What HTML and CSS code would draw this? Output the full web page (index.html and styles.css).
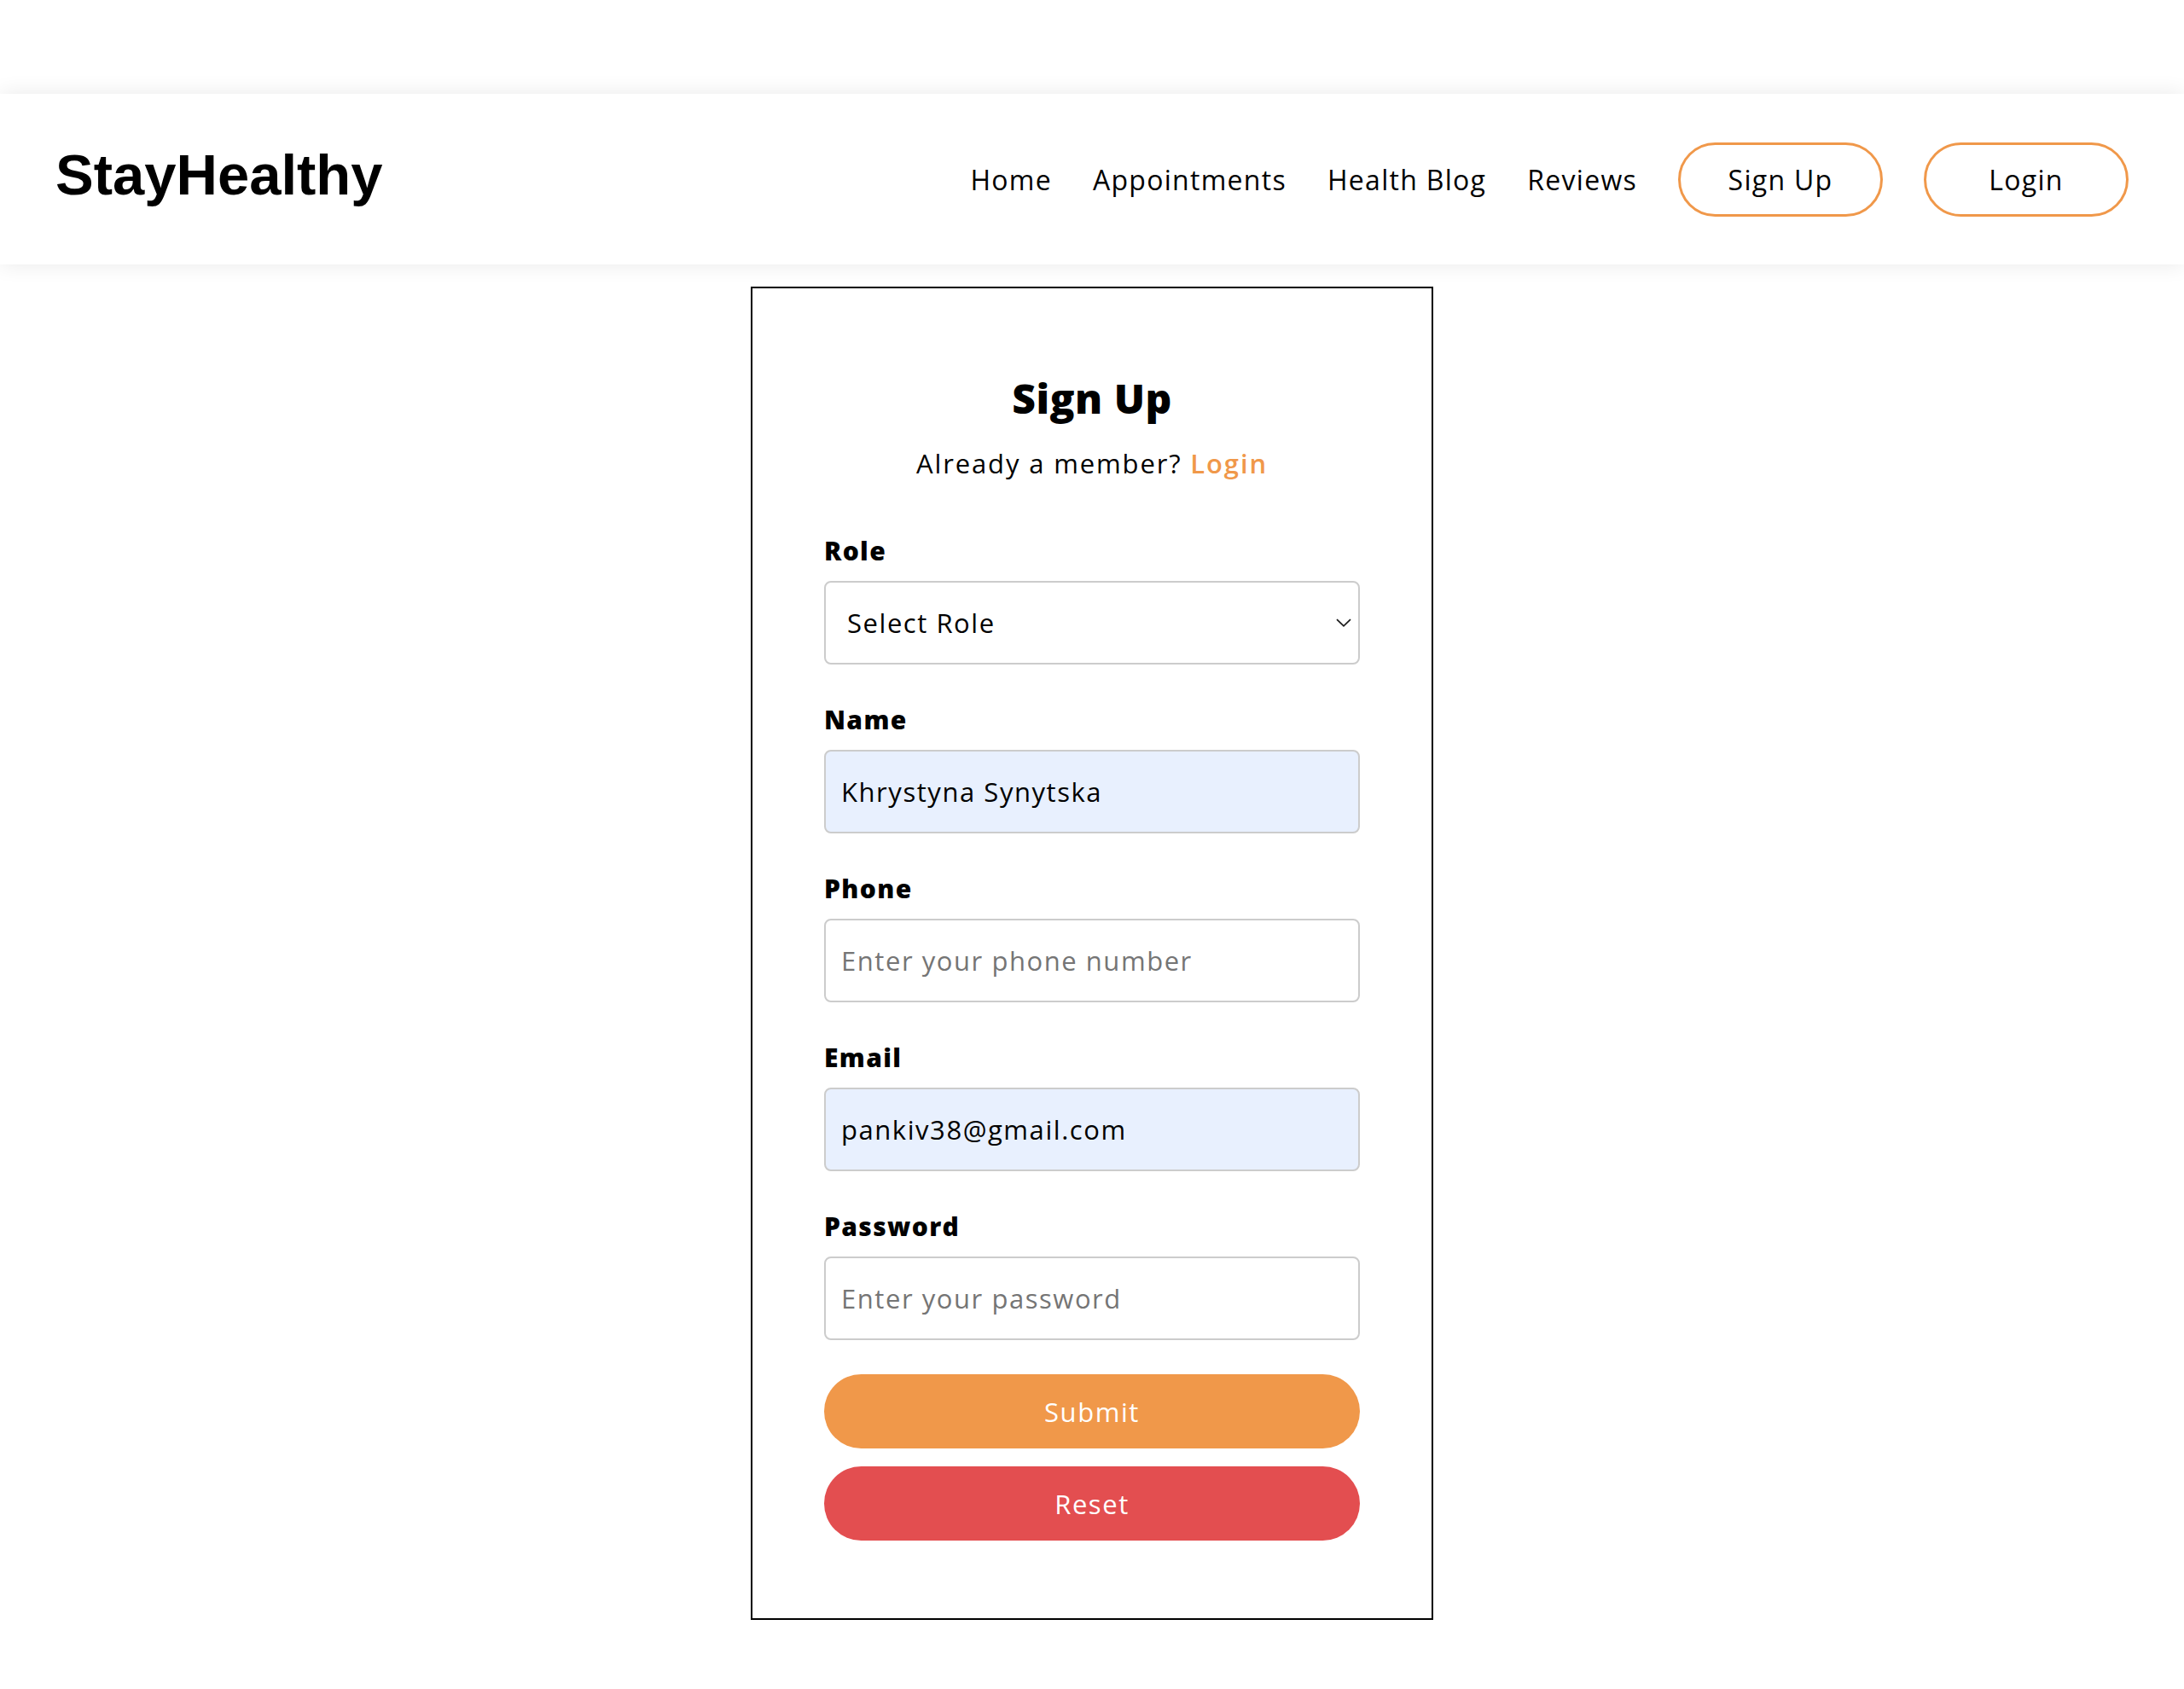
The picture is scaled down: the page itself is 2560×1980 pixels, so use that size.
FILE: index.html
```html
<!DOCTYPE html>
<html lang="en">
<head>
<meta charset="utf-8">
<title>StayHealthy - Sign Up</title>
<link rel="stylesheet" href="styles.css">
</head>
<body>
<div class="page">
  <header class="navbar">
    <a class="logo" href="#">StayHealthy</a>
    <nav class="nav">
      <a class="nav-link" href="#">Home</a>
      <a class="nav-link" href="#">Appointments</a>
      <a class="nav-link" href="#">Health Blog</a>
      <a class="nav-link" href="#">Reviews</a>
      <a class="nav-btn" href="#">Sign Up</a>
      <a class="nav-btn" href="#">Login</a>
    </nav>
  </header>
  <main class="main">
    <section class="card">
      <h1 class="title">Sign Up</h1>
      <p class="subtitle">Already a member? <a class="link" href="#">Login</a></p>
      <form class="form">
        <div class="field">
          <label class="label">Role</label>
          <div class="select">
            <span class="select-text">Select Role</span>
            <svg class="chevron" width="18" height="10" viewBox="0 0 18 10"><path d="M1 1.2 L9 8.8 L17 1.2" fill="none" stroke="#1a1a1a" stroke-width="1.7"/></svg>
          </div>
        </div>
        <div class="field">
          <label class="label">Name</label>
          <input class="input input-filled" type="text" value="Khrystyna Synytska">
        </div>
        <div class="field">
          <label class="label">Phone</label>
          <input class="input" type="tel" placeholder="Enter your phone number">
        </div>
        <div class="field">
          <label class="label">Email</label>
          <input class="input input-filled" type="email" value="pankiv38@gmail.com">
        </div>
        <div class="field field-last">
          <label class="label">Password</label>
          <input class="input" type="password" placeholder="Enter your password">
        </div>
        <button class="btn btn-submit" type="button">Submit</button>
        <button class="btn btn-reset" type="button">Reset</button>
      </form>
    </section>
  </main>
</div>
</body>
</html>
```

FILE: styles.css
```css
html, body {
  margin: 0;
  padding: 0;
  background: #ffffff;
}

body {
  font-family: "Open Sans", "Liberation Sans", sans-serif;
  color: #000;
  letter-spacing: 0.05em;
}

.page {
  padding-top: 110px;
}

.navbar {
  height: 200px;
  box-sizing: border-box;
  padding: 0 65px;
  display: flex;
  align-items: center;
  justify-content: space-between;
  background: #fff;
  box-shadow: 0 0 24px rgba(0, 0, 0, 0.09);
  position: relative;
}

.logo {
  font-family: "Liberation Sans", Arial, sans-serif;
  font-weight: 700;
  font-size: 67px;
  letter-spacing: 0;
  color: #000;
  text-decoration: none;
  margin-top: -12px;
}

.nav {
  display: flex;
  align-items: center;
  gap: 48px;
}

.nav-link {
  font-size: 32px;
  color: #000;
  text-decoration: none;
  font-weight: 500;
  letter-spacing: 0.04em;
}

.nav-btn {
  width: 240px;
  height: 87px;
  box-sizing: border-box;
  border: 3px solid #f0984a;
  border-radius: 44px;
  display: flex;
  align-items: center;
  justify-content: center;
  font-size: 32px;
  letter-spacing: 0.04em;
  color: #000;
  text-decoration: none;
}

.main {
  padding: 26px 0 60px;
}

.card {
  width: 800px;
  box-sizing: border-box;
  margin: 0 auto;
  border: 2px solid #000;
  padding: 100px 84px 91px;
}

.title {
  margin: 0;
  font-size: 48px;
  line-height: 58px;
  font-weight: 800;
  letter-spacing: 0.01em;
  text-align: center;
}

.subtitle {
  margin: 27px 0 0;
  font-size: 31px;
  line-height: 40px;
  text-align: center;
  letter-spacing: 0.06em;
}

.link {
  color: #f0984a;
  font-weight: 600;
  text-decoration: none;
}

.form {
  margin-top: 64px;
  display: flex;
  flex-direction: column;
}

.field {
  display: flex;
  flex-direction: column;
  margin-bottom: 46px;
}

.field-last {
  margin-bottom: 40px;
}

.label {
  font-size: 30px;
  line-height: 38px;
  font-weight: 800;
  letter-spacing: 0.045em;
  margin-bottom: 16px;
}

.select,
.input {
  height: 98px;
  box-sizing: border-box;
  border: 2px solid #cccccc;
  border-radius: 8px;
  font-family: "Open Sans", "Liberation Sans", sans-serif;
  font-size: 31px;
  letter-spacing: 0.05em;
  color: #000;
  background: #fff;
}

.select {
  display: flex;
  align-items: center;
  justify-content: space-between;
  padding: 0 8px 0 25px;
}

.input {
  width: 100%;
  padding: 0 18px;
  outline: none;
}

.input::placeholder {
  color: #757575;
}

.input-filled {
  background: #e8f0fe;
}

.btn {
  height: 87px;
  border: none;
  border-radius: 44px;
  color: #fff;
  font-family: "Open Sans", "Liberation Sans", sans-serif;
  font-size: 31px;
  letter-spacing: 0.05em;
  cursor: pointer;
}

.btn-submit {
  background: #f0984a;
}

.btn-reset {
  background: #e34e50;
  margin-top: 21px;
}
```
